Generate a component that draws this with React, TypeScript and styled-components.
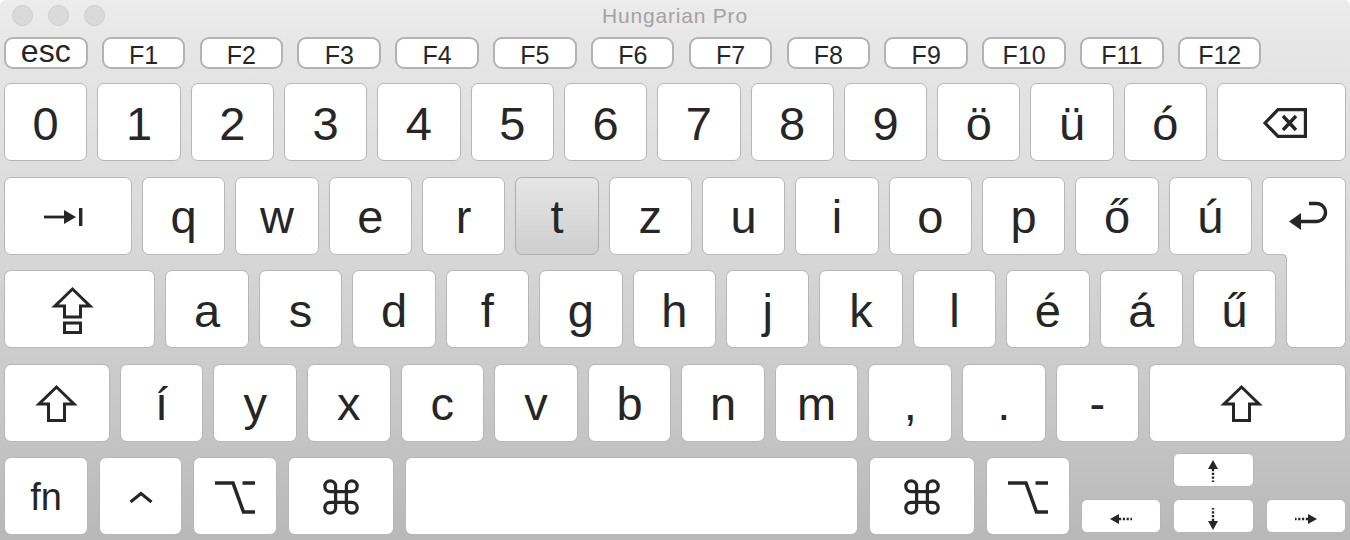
import React from "react";
import styled, { createGlobalStyle, css } from "styled-components";

const FONT = `"Liberation Sans", Arial, Helvetica, sans-serif`;
const INK = "#262626";
const EDGE = "#b7b7b7";

const Global = createGlobalStyle`
  *, *::before, *::after { box-sizing: border-box; }
  html, body { margin: 0; padding: 0; background: #fff; }
  body { width: 1350px; height: 540px; overflow: hidden; font-family: ${FONT}; }
`;

const Window = styled.div`
  width: 1350px;
  height: 540px;
  border-radius: 6px 6px 0 0;
  background: linear-gradient(#ececec 0px, #e5e5e5 60px, #dcdcdc 200px, #d2d2d2 300px, #c4c4c4 440px, #b8b8b8 540px);
  display: flex;
  flex-direction: column;
  overflow: hidden;
`;

const TitleBar = styled.div`
  height: 31px;
  display: grid;
  grid-template-columns: 1fr auto 1fr;
  align-items: center;
`;

const Lights = styled.div`
  display: flex;
  gap: 15px;
  padding-left: 12px;
`;

const Light = styled.span`
  width: 21px;
  height: 21px;
  border-radius: 50%;
  background: #dadada;
  border: 1px solid #cdcdcd;
`;

const Title = styled.div`
  font: 21px ${FONT};
  letter-spacing: 0.8px;
  color: #a3a3a3;
  line-height: 1;
`;

const FnRow = styled.div`
  margin-top: 6px;
  padding: 0 4px;
  display: flex;
  gap: 14.33px;
  height: 32px;
`;

const FnKey = styled.div<{ $big?: boolean }>`
  width: 83.5px;
  height: 32px;
  border: 2px solid #b3b3b3;
  border-radius: 9px;
  background: #fff;
  color: ${INK};
  display: flex;
  justify-content: center;
  align-items: center;
  line-height: 1;
  ${(p) =>
    p.$big
      ? css`
          font: 32px ${FONT};
          padding-bottom: 3px;
        `
      : css`
          font: 25px ${FONT};
          padding-top: 5px;
        `}
`;

const Board = styled.div`
  padding: 14px 4px 0;
  display: flex;
  flex-direction: column;
  gap: 15.5px;
`;

const Row = styled.div<{ $gap?: number }>`
  display: flex;
  gap: ${(p) => p.$gap ?? 10}px;
  height: 78px;
`;

const Key = styled.div<{ $grow?: number; $pressed?: boolean; $fs?: number; $shift?: number }>`
  flex: ${(p) => p.$grow ?? 83.33} 1 0;
  min-width: 0;
  height: 78px;
  border: 1.5px solid ${(p) => (p.$pressed ? "#adadad" : EDGE)};
  border-radius: 7px;
  background: ${(p) => (p.$pressed ? "linear-gradient(#e6e6e6, #cecece)" : "#fff")};
  color: ${INK};
  font: ${(p) => p.$fs ?? 47}px ${FONT};
  line-height: 1;
  display: flex;
  align-items: center;
  justify-content: center;
  padding-top: 2px;
  position: relative;
  & > svg {
    transform: translateX(${(p) => p.$shift ?? 0}px);
  }
`;

const ReturnTop = styled(Key)`
  border-bottom-right-radius: 0;
  padding-top: 0;
`;

const ReturnBottom = styled.div`
  flex: 59 1 0;
  margin-top: -17.5px;
  height: 95.5px;
  border: 1.5px solid ${EDGE};
  border-top: none;
  border-radius: 0 0 7px 7px;
  background: #fff;
  position: relative;
  &::before {
    content: "";
    position: absolute;
    left: -6.5px;
    top: 0.5px;
    width: 6.5px;
    height: 6.5px;
    background: radial-gradient(circle at 0 100%, transparent 5px, ${EDGE} 5px, ${EDGE} 6.5px, #fff 6.5px);
  }
`;

const Arrows = styled.div`
  flex: 268 1 0;
  margin-top: -4px;
  height: 80px;
  display: grid;
  grid-template-columns: 1fr 1fr 1fr;
  grid-template-rows: 34px 34px;
  column-gap: 12px;
  row-gap: 12px;
`;

const ArrowKey = styled.div<{ $col: number; $row: number }>`
  grid-column: ${(p) => p.$col};
  grid-row: ${(p) => p.$row};
  background: #fff;
  border: 1.5px solid ${EDGE};
  border-radius: 6px;
  display: flex;
  align-items: center;
  justify-content: center;
  padding-top: ${(p) => (p.$row === 2 ? 6 : 2)}px;
`;

const Glyph = styled.svg`
  display: block;
  overflow: visible;
`;

const ShiftIcon = () => (
  <Glyph width="39" height="37" viewBox="0 0 39 37">
    <path d="M19.5 2 L2 19 H11.5 V35.5 H27.5 V19 H37 Z" fill="none" stroke={INK} strokeWidth="3" strokeLinejoin="miter" />
  </Glyph>
);

const CapsIcon = () => (
  <Glyph width="39" height="47" viewBox="0 0 39 47">
    <path d="M19.5 2 L2 19 H11.5 V30 H27.5 V19 H37 Z" fill="none" stroke={INK} strokeWidth="3" strokeLinejoin="miter" />
    <rect x="11.5" y="36" width="16" height="9.5" fill="none" stroke={INK} strokeWidth="3" />
  </Glyph>
);

const TabIcon = () => (
  <Glyph width="40" height="18" viewBox="0 0 40 18">
    <rect x="0" y="7.6" width="23" height="2.8" fill={INK} />
    <path d="M20 2 L32 9 L20 16 Z" fill={INK} />
    <rect x="35" y="0" width="3.4" height="18" fill={INK} />
  </Glyph>
);

const ReturnIcon = () => (
  <Glyph width="38" height="30" viewBox="0 0 38 30">
    <path d="M10 20.5 H27.5 A9 9 0 0 0 27.5 2.5 H20" fill="none" stroke={INK} strokeWidth="3.4" />
    <path d="M0 20.5 L12 12 L12 29 Z" fill={INK} />
  </Glyph>
);

const DeleteIcon = () => (
  <Glyph width="44" height="30" viewBox="0 0 44 30">
    <path d="M2 15 L15 1.6 H42.4 V28.4 H15 Z" fill="none" stroke={INK} strokeWidth="3.2" strokeLinejoin="miter" />
    <path d="M20 8 L33 22 M33 8 L20 22" stroke={INK} strokeWidth="3.4" />
  </Glyph>
);

const OptionIcon = () => (
  <Glyph width="40" height="33" viewBox="0 0 40 33">
    <path d="M0 2 H18 L28.5 31 H40 M27.5 2 H40" fill="none" stroke={INK} strokeWidth="3.5" strokeLinejoin="miter" />
  </Glyph>
);

const CmdIcon = () => (
  <Glyph width="36" height="36" viewBox="-2 -2 40 40">
    <path
      d="M12 12 V6 A6 6 0 1 0 6 12 H30 A6 6 0 1 0 24 6 V30 A6 6 0 1 0 30 24 H6 A6 6 0 1 0 12 30 Z"
      fill="none"
      stroke={INK}
      strokeWidth="3.6"
      strokeLinejoin="round"
    />
  </Glyph>
);

const CaretIcon = () => (
  <Glyph width="24" height="11" viewBox="0 0 24 11">
    <path d="M1.5 10 L12 1.5 L22.5 10" fill="none" stroke={INK} strokeWidth="3" />
  </Glyph>
);

const ArrowGlyph = ({ dir }: { dir: "up" | "down" | "left" | "right" }) => {
  const rot = { up: 0, right: 90, down: 180, left: 270 }[dir];
  const horiz = dir === "left" || dir === "right";
  return (
    <Glyph width={horiz ? 22 : 10} height={horiz ? 10 : 22} viewBox={horiz ? "-6 6 22 10" : "0 0 10 22"}>
      <g transform={`rotate(${rot} 5 11)`}>
        <path d="M0 9 L5 0 L10 9 Z" fill={INK} />
        <line x1="5" y1="9" x2="5" y2="22" stroke={INK} strokeWidth="2.4" strokeDasharray="2.2 1.6" />
      </g>
    </Glyph>
  );
};

const fKeys = ["F1", "F2", "F3", "F4", "F5", "F6", "F7", "F8", "F9", "F10", "F11", "F12"];
const row1 = ["0", "1", "2", "3", "4", "5", "6", "7", "8", "9", "ö", "ü", "ó"];
const row2 = ["q", "w", "e", "r", "t", "z", "u", "i", "o", "p", "ő", "ú"];
const row3 = ["a", "s", "d", "f", "g", "h", "j", "k", "l", "é", "á", "ű"];
const row4 = ["í", "y", "x", "c", "v", "b", "n", "m", ",", ".", "-"];

export default function App() {
  return (
    <>
      <Global />
      <Window>
        <TitleBar>
          <Lights>
            <Light />
            <Light />
            <Light />
          </Lights>
          <Title>Hungarian Pro</Title>
          <div />
        </TitleBar>
        <FnRow>
          <FnKey $big>esc</FnKey>
          {fKeys.map((k) => (
            <FnKey key={k}>{k}</FnKey>
          ))}
        </FnRow>
        <Board>
          <Row>
            {row1.map((k) => (
              <Key key={k}>{k}</Key>
            ))}
            <Key $grow={130} $shift={4}>
              <DeleteIcon />
            </Key>
          </Row>
          <Row>
            <Key $grow={129} $shift={-4}>
              <TabIcon />
            </Key>
            {row2.map((k) => (
              <Key key={k} $pressed={k === "t"}>
                {k}
              </Key>
            ))}
            <ReturnTop $grow={84} $shift={4}>
              <ReturnIcon />
            </ReturnTop>
          </Row>
          <Row>
            <Key $grow={153} $shift={-7}>
              <CapsIcon />
            </Key>
            {row3.map((k) => (
              <Key key={k}>{k}</Key>
            ))}
            <ReturnBottom />
          </Row>
          <Row>
            <Key $grow={106}>
              <ShiftIcon />
            </Key>
            {row4.map((k) => (
              <Key key={k}>{k}</Key>
            ))}
            <Key $grow={199} $shift={-6}>
              <ShiftIcon />
            </Key>
          </Row>
          <Row $gap={11}>
            <Key $grow={83} $fs={38}>
              fn
            </Key>
            <Key $grow={82}>
              <CaretIcon />
            </Key>
            <Key $grow={82}>
              <OptionIcon />
            </Key>
            <Key $grow={105}>
              <CmdIcon />
            </Key>
            <Key $grow={456} />
            <Key $grow={105}>
              <CmdIcon />
            </Key>
            <Key $grow={82}>
              <OptionIcon />
            </Key>
            <Arrows>
              <ArrowKey $col={2} $row={1}>
                <ArrowGlyph dir="up" />
              </ArrowKey>
              <ArrowKey $col={1} $row={2}>
                <ArrowGlyph dir="left" />
              </ArrowKey>
              <ArrowKey $col={2} $row={2}>
                <ArrowGlyph dir="down" />
              </ArrowKey>
              <ArrowKey $col={3} $row={2}>
                <ArrowGlyph dir="right" />
              </ArrowKey>
            </Arrows>
          </Row>
        </Board>
      </Window>
    </>
  );
}
